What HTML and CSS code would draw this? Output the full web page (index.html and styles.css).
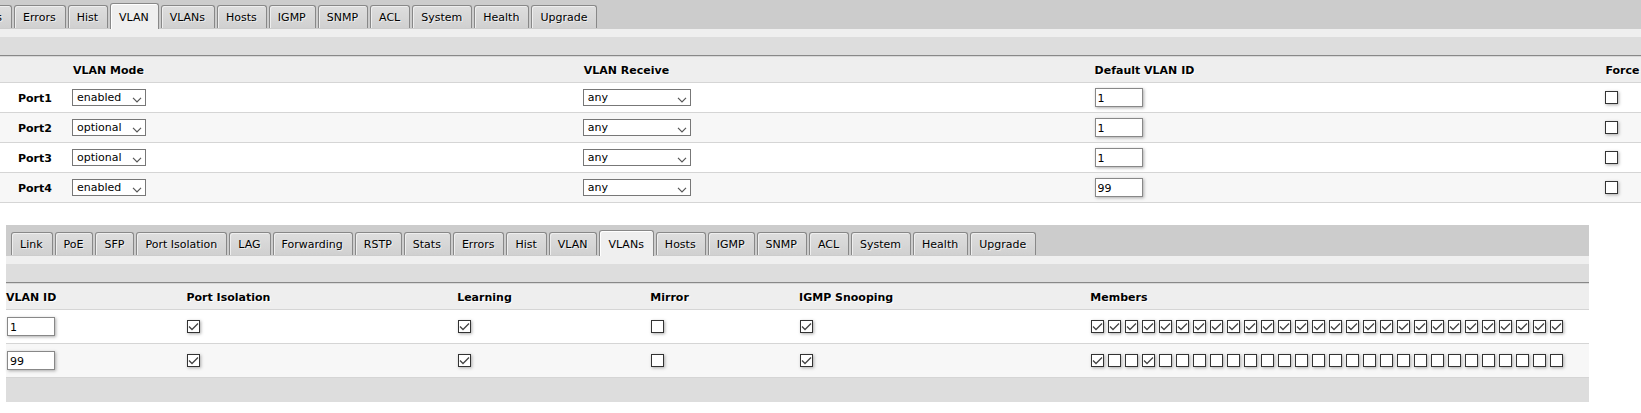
FILE: index.html
```
<!DOCTYPE html>
<html lang="en">
<head>
<meta charset="utf-8">
<title>VLAN configuration</title>
<link rel="stylesheet" href="styles.css">
</head>
<body>
<section class="panel panel-ports">
  <nav class="tabs">
    <a class="tab" href="#stats">Stats</a>
    <a class="tab" href="#errors">Errors</a>
    <a class="tab" href="#hist">Hist</a>
    <a class="tab active" href="#vlan">VLAN</a>
    <a class="tab" href="#vlans">VLANs</a>
    <a class="tab" href="#hosts">Hosts</a>
    <a class="tab" href="#igmp">IGMP</a>
    <a class="tab" href="#snmp">SNMP</a>
    <a class="tab" href="#acl">ACL</a>
    <a class="tab" href="#system">System</a>
    <a class="tab" href="#health">Health</a>
    <a class="tab" href="#upgrade">Upgrade</a>
  </nav>
  <div class="toolbar"></div>
  <table class="grid ports">
    <colgroup><col class="c-port"><col><col><col><col></colgroup>
    <thead>
      <tr><td></td><th scope="col">VLAN Mode</th><th scope="col">VLAN Receive</th><th scope="col">Default VLAN ID</th><th scope="col">Force</th></tr>
    </thead>
    <tbody>
      <tr><th scope="row">Port1</th>
        <td><select class="mode" aria-label="Port1 VLAN Mode"><option>enabled</option><option>optional</option></select></td>
        <td><select class="receive" aria-label="Port1 VLAN Receive"><option>any</option></select></td>
        <td><input class="num" type="text" value="1" aria-label="Port1 Default VLAN ID"></td>
        <td><input type="checkbox" aria-label="Port1 Force"></td></tr>
      <tr><th scope="row">Port2</th>
        <td><select class="mode" aria-label="Port2 VLAN Mode"><option>optional</option><option>enabled</option></select></td>
        <td><select class="receive" aria-label="Port2 VLAN Receive"><option>any</option></select></td>
        <td><input class="num" type="text" value="1" aria-label="Port2 Default VLAN ID"></td>
        <td><input type="checkbox" aria-label="Port2 Force"></td></tr>
      <tr><th scope="row">Port3</th>
        <td><select class="mode" aria-label="Port3 VLAN Mode"><option>optional</option><option>enabled</option></select></td>
        <td><select class="receive" aria-label="Port3 VLAN Receive"><option>any</option></select></td>
        <td><input class="num" type="text" value="1" aria-label="Port3 Default VLAN ID"></td>
        <td><input type="checkbox" aria-label="Port3 Force"></td></tr>
      <tr><th scope="row">Port4</th>
        <td><select class="mode" aria-label="Port4 VLAN Mode"><option>enabled</option><option>optional</option></select></td>
        <td><select class="receive" aria-label="Port4 VLAN Receive"><option>any</option></select></td>
        <td><input class="num" type="text" value="99" aria-label="Port4 Default VLAN ID"></td>
        <td><input type="checkbox" aria-label="Port4 Force"></td></tr>
    </tbody>
  </table>
</section>

<section class="panel panel-vlans">
  <nav class="tabs">
    <a class="tab" href="#link">Link</a>
    <a class="tab" href="#poe">PoE</a>
    <a class="tab" href="#sfp">SFP</a>
    <a class="tab" href="#isolation">Port Isolation</a>
    <a class="tab" href="#lag">LAG</a>
    <a class="tab" href="#forwarding">Forwarding</a>
    <a class="tab" href="#rstp">RSTP</a>
    <a class="tab" href="#stats">Stats</a>
    <a class="tab" href="#errors">Errors</a>
    <a class="tab" href="#hist">Hist</a>
    <a class="tab" href="#vlan">VLAN</a>
    <a class="tab active" href="#vlans">VLANs</a>
    <a class="tab" href="#hosts">Hosts</a>
    <a class="tab" href="#igmp">IGMP</a>
    <a class="tab" href="#snmp">SNMP</a>
    <a class="tab" href="#acl">ACL</a>
    <a class="tab" href="#system">System</a>
    <a class="tab" href="#health">Health</a>
    <a class="tab" href="#upgrade">Upgrade</a>
  </nav>
  <div class="toolbar"></div>
  <table class="grid vlans">
    <colgroup><col class="c-id"><col class="c-iso"><col class="c-learn"><col class="c-mirror"><col class="c-igmp"><col></colgroup>
    <thead>
      <tr><th scope="col">VLAN ID</th><th scope="col">Port Isolation</th><th scope="col">Learning</th><th scope="col">Mirror</th><th scope="col">IGMP Snooping</th><th scope="col">Members</th></tr>
    </thead>
    <tbody>
      <tr>
        <td><input class="num" type="text" value="1" aria-label="VLAN ID"></td>
        <td><input type="checkbox" checked aria-label="Port Isolation"></td>
        <td><input type="checkbox" checked aria-label="Learning"></td>
        <td><input type="checkbox" aria-label="Mirror"></td>
        <td><input type="checkbox" checked aria-label="IGMP Snooping"></td>
        <td><div class="members">
          <input type="checkbox" checked aria-label="Member 1"><input type="checkbox" checked aria-label="Member 2"><input type="checkbox" checked aria-label="Member 3"><input type="checkbox" checked aria-label="Member 4">
          <input type="checkbox" checked aria-label="Member 5"><input type="checkbox" checked aria-label="Member 6"><input type="checkbox" checked aria-label="Member 7"><input type="checkbox" checked aria-label="Member 8">
          <input type="checkbox" checked aria-label="Member 9"><input type="checkbox" checked aria-label="Member 10"><input type="checkbox" checked aria-label="Member 11"><input type="checkbox" checked aria-label="Member 12">
          <input type="checkbox" checked aria-label="Member 13"><input type="checkbox" checked aria-label="Member 14"><input type="checkbox" checked aria-label="Member 15"><input type="checkbox" checked aria-label="Member 16">
          <input type="checkbox" checked aria-label="Member 17"><input type="checkbox" checked aria-label="Member 18"><input type="checkbox" checked aria-label="Member 19"><input type="checkbox" checked aria-label="Member 20">
          <input type="checkbox" checked aria-label="Member 21"><input type="checkbox" checked aria-label="Member 22"><input type="checkbox" checked aria-label="Member 23"><input type="checkbox" checked aria-label="Member 24">
          <input type="checkbox" checked aria-label="Member 25"><input type="checkbox" checked aria-label="Member 26"><input type="checkbox" checked aria-label="Member 27"><input type="checkbox" checked aria-label="Member 28">
        </div></td>
      </tr>
      <tr>
        <td><input class="num" type="text" value="99" aria-label="VLAN ID"></td>
        <td><input type="checkbox" checked aria-label="Port Isolation"></td>
        <td><input type="checkbox" checked aria-label="Learning"></td>
        <td><input type="checkbox" aria-label="Mirror"></td>
        <td><input type="checkbox" checked aria-label="IGMP Snooping"></td>
        <td><div class="members">
          <input type="checkbox" checked aria-label="Member 1"><input type="checkbox" aria-label="Member 2"><input type="checkbox" aria-label="Member 3"><input type="checkbox" checked aria-label="Member 4">
          <input type="checkbox" aria-label="Member 5"><input type="checkbox" aria-label="Member 6"><input type="checkbox" aria-label="Member 7"><input type="checkbox" aria-label="Member 8">
          <input type="checkbox" aria-label="Member 9"><input type="checkbox" aria-label="Member 10"><input type="checkbox" aria-label="Member 11"><input type="checkbox" aria-label="Member 12">
          <input type="checkbox" aria-label="Member 13"><input type="checkbox" aria-label="Member 14"><input type="checkbox" aria-label="Member 15"><input type="checkbox" aria-label="Member 16">
          <input type="checkbox" aria-label="Member 17"><input type="checkbox" aria-label="Member 18"><input type="checkbox" aria-label="Member 19"><input type="checkbox" aria-label="Member 20">
          <input type="checkbox" aria-label="Member 21"><input type="checkbox" aria-label="Member 22"><input type="checkbox" aria-label="Member 23"><input type="checkbox" aria-label="Member 24">
          <input type="checkbox" aria-label="Member 25"><input type="checkbox" aria-label="Member 26"><input type="checkbox" aria-label="Member 27"><input type="checkbox" aria-label="Member 28">
        </div></td>
      </tr>
    </tbody>
  </table>
  <div class="footer"></div>
</section>
</body>
</html>
```
FILE: styles.css
```
* { box-sizing: border-box; }

body {
  margin: 0;
  background: #fff;
  color: #000;
  font: 11px/14px Verdana, "DejaVu Sans", sans-serif;
}

.panel-ports { overflow: hidden; }
.panel-vlans { margin: 22px 52px 0 6px; }

/* Tabs */
.tabs {
  display: flex;
  align-items: flex-end;
  gap: 2px;
  padding: 5px 5px 0;
  background: #ccc;
}
.panel-ports .tabs { padding-top: 3px; }
.panel-ports .tab:first-child { margin-left: -40px; }

.tab {
  flex: none;
  height: 23px;
  margin-bottom: 1px;
  padding: 5px 9px 0 8px;
  border: 1px solid #888;
  border-bottom: 0;
  border-radius: 3px 3px 0 0;
  background: linear-gradient(#dedede, #d0d0d0);
  box-shadow: inset 1px 1px 0 #eee;
  color: #000;
  text-decoration: none;
  text-shadow: 1px 1px 0 #eee;
}
.tab.active {
  height: 26px;
  margin-bottom: 0;
  padding-top: 7px;
  background: #efefef;
  box-shadow: inset 1px 1px 0 #fff;
}

.toolbar {
  height: 27px;
  margin-bottom: 1px;
  border-top: 8px solid #efefef;
  border-bottom: 1px solid #888;
  background: #ddd;
  box-shadow: 0 1px 0 #d8d8d8;
}

.footer { height: 24px; background: #ddd; }

/* Tables */
.grid {
  table-layout: fixed;
  border-collapse: separate;
  border-spacing: 0;
  width: 100%;
}
.grid.ports { width: 128.9%; }
.grid th, .grid td {
  padding: 0;
  border-bottom: 1px solid #d5d5d5;
  text-align: left;
  vertical-align: middle;
}
.grid thead tr { height: 26px; background: #eee; text-shadow: 1px 1px 0 #fff; }
.grid thead th { padding-top: 2px; }
.grid tbody tr { height: 34px; }
.grid.ports tbody tr { height: 30px; }
.grid tbody tr:nth-child(even) { background: #f7f7f7; }
.grid tbody th { padding: 2px 0 0 18px; }
.ports thead th { padding-left: 1px; }

.c-port { width: 72px; }
.c-id { width: 11.4%; }
.c-iso { width: 17.1%; }
.c-learn { width: 12.2%; }
.c-mirror { width: 9.4%; }
.c-igmp { width: 18.4%; }

/* Controls */
select, input { font: inherit; color: #000; }

select {
  display: block;
  appearance: none;
  height: 17px;
  margin: 0;
  padding: 1px 16px 0 4px;
  border: 1px solid #777;
  border-radius: 0;
  background: #fff url("data:image/svg+xml,%3Csvg xmlns='http://www.w3.org/2000/svg' width='10' height='6'%3E%3Cpath d='M1 .8l4 4 4-4' fill='none' stroke='%23555' stroke-width='1.2'/%3E%3C/svg%3E") no-repeat right 3px top 7px;
}
.mode { width: 74px; }
.receive { width: 108px; }

.num {
  display: block;
  width: 48px;
  height: 19px;
  margin: 0 0 0 1px;
  padding: 1px 2px 0;
  border: 1px solid #888;
  border-radius: 0;
  background: #fff;
  box-shadow: 1px 1px 3px #aaa;
}

input[type="checkbox"] {
  display: block;
  appearance: none;
  flex: none;
  width: 13px;
  height: 13px;
  margin: 0 0 0 1px;
  border: 1px solid #333;
  background: #fff;
  box-shadow: 1px 1px 3px #aaa;
}
input[type="checkbox"]:checked {
  background: #fff url("data:image/svg+xml,%3Csvg xmlns='http://www.w3.org/2000/svg' width='11' height='11'%3E%3Cpath d='M1 5.5l3 3 6-6' fill='none' stroke='%23444' stroke-width='1.3'/%3E%3C/svg%3E") no-repeat;
}
.members { display: flex; gap: 3px; }
```
